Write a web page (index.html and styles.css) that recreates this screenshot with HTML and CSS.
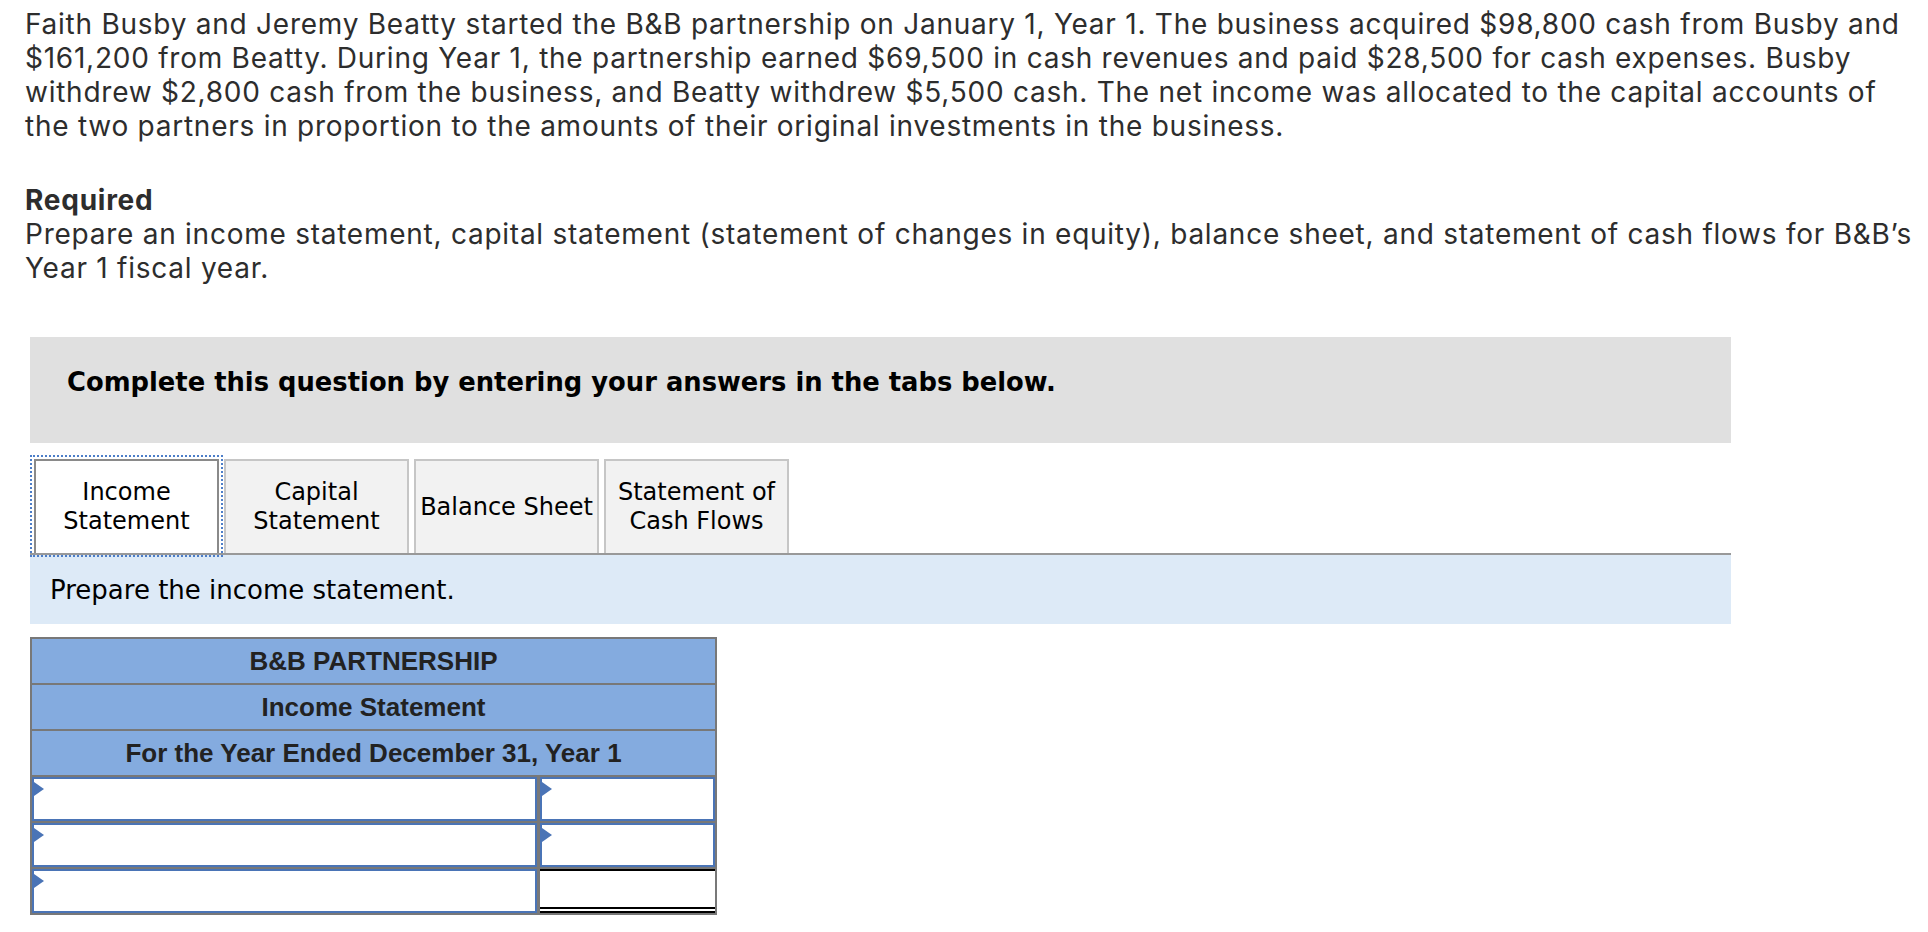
FILE: index.html
```html
<!DOCTYPE html>
<html>
<head>
<meta charset="utf-8">
<title>B&amp;B partnership - Income statement</title>
<link rel="stylesheet" href="styles.css">
</head>
<body>

<div class="problem">
<p>Faith Busby and Jeremy Beatty started the B&amp;B partnership on January 1, Year 1. The business acquired $98,800 cash from Busby and $161,200 from Beatty. During Year 1, the partnership earned $69,500 in cash revenues and paid $28,500 for cash expenses. Busby withdrew $2,800 cash from the business, and Beatty withdrew $5,500 cash. The net income was allocated to the capital accounts of the two partners in proportion to the amounts of their original investments in the business.</p>

<div class="required">
<h3>Required</h3>
<p>Prepare an income statement, capital statement (statement of changes in equity), balance sheet, and statement of cash flows for B&amp;B’s Year 1 fiscal year.</p>
</div>
</div>

<div class="widget">
<div class="notice">Complete this question by entering your answers in the tabs below.</div>

<div class="tabs">
<span class="tab active">Income<br>Statement</span>
<span class="tab">Capital<br>Statement</span>
<span class="tab">Balance Sheet</span>
<span class="tab">Statement of<br>Cash Flows</span>
</div>

<div class="instr">Prepare the income statement.</div>

<table class="stmt">
<tr><th colspan="2">B&amp;B PARTNERSHIP</th></tr>
<tr><th colspan="2">Income Statement</th></tr>
<tr><th colspan="2">For the Year Ended December 31, Year 1</th></tr>
<tr>
  <td class="lbl"><div class="field"><span class="pick"></span></div></td>
  <td class="amt"><div class="field"><span class="pick"></span></div></td>
</tr>
<tr>
  <td class="lbl"><div class="field"><span class="pick"></span></div></td>
  <td class="amt"><div class="field"><span class="pick"></span></div></td>
</tr>
<tr class="last">
  <td class="lbl"><div class="field"><span class="pick"></span></div></td>
  <td class="amt"><div class="total"></div></td>
</tr>
</table>
</div>

</body>
</html>
```

FILE: styles.css
```css
body {
    margin: 0;
    background: #fff;
    color: #2d2d2d;
    font-family: Inter, "Liberation Sans", sans-serif;
}

.problem {
    width: 1888px;
    padding: 7px 0 0 25px;
    font-size: 28px;
    letter-spacing: 0.75px;
    line-height: 34px;
}

.problem p {
    margin: 0;
}

.required {
    margin-top: 40px;
}

.required h3 {
    margin: 0;
    font-size: 28px;
    font-weight: 700;
    line-height: 34px;
}

.widget {
    width: 1701px;
    margin: 52px 0 0 30px;
    color: #000;
    font-family: "DejaVu Sans", Verdana, sans-serif;
}

.notice {
    height: 106px;
    box-sizing: border-box;
    padding: 30px 0 0 37px;
    background: #e0e0e0;
    font-size: 25.8px;
    font-weight: bold;
    line-height: 30px;
}

.tabs {
    display: flex;
    margin-top: 16px;
    padding-left: 4px;
    border-bottom: 2px solid #999;
}

.tab {
    display: flex;
    align-items: center;
    justify-content: center;
    width: 185px;
    height: 94px;
    box-sizing: border-box;
    margin-right: 5px;
    background: #f2f2f2;
    border: 2px solid #c6c6c6;
    border-bottom: none;
    text-align: center;
    font-size: 24px;
    line-height: 29px;
}

.tab.active {
    background: #fff;
    border-color: #8a8a8a;
    outline: 2px dotted #4d7ec8;
    outline-offset: 2px;
}

.instr {
    display: flex;
    align-items: center;
    height: 69px;
    padding-left: 20px;
    background: #ddeaf7;
    font-size: 26px;
}

.stmt {
    width: 687px;
    margin-top: 13px;
    border: 2px solid #787878;
    border-spacing: 0;
    font-family: "Liberation Sans", Arial, sans-serif;
}

.stmt th {
    height: 44px;
    padding: 0;
    background: #84abdf;
    border-bottom: 2px solid #787878;
    color: #222;
    font-size: 26px;
    font-weight: bold;
}

.stmt td {
    padding: 0;
    border-bottom: 2px solid #787878;
}

.stmt tr.last td {
    border-bottom: none;
}

.stmt td.lbl {
    width: 505px;
    border-right: 3px solid #787878;
}

.field {
    position: relative;
    height: 40px;
    background: #fff;
    border: 2px solid #4a74b6;
}

.pick {
    position: absolute;
    left: 0;
    top: 3px;
    border-left: 10px solid #4a74b6;
    border-top: 7px solid transparent;
    border-bottom: 7px solid transparent;
}

.total {
    height: 36px;
    border-top: 2px solid #000;
    border-bottom: 6px double #000;
}
```
